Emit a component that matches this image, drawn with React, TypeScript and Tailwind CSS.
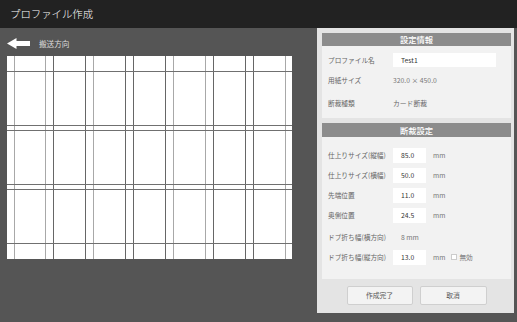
const FONT = { fontFamily: '"Noto Sans CJK JP", "Noto Sans", sans-serif' };

const V_LINES: [number, string][] = [
  [7, "#a8a8a8"],
  [38, "#a8a8a8"],
  [46, "#666"],
  [78, "#666"],
  [86, "#a8a8a8"],
  [118, "#666"],
  [126, "#666"],
  [158, "#666"],
  [166, "#a8a8a8"],
  [198, "#a8a8a8"],
  [206, "#666"],
  [238, "#666"],
  [246, "#666"],
  [278, "#a8a8a8"],
];
const H_LINES = [15, 69, 74, 128, 133, 187];

function LayoutPreview() {
  return (
    <svg width={285} height={203} className="block">
      <rect width={285} height={203} fill="#fff" />
      {V_LINES.map(([x, c]) => (
        <line key={x} x1={x + 0.5} x2={x + 0.5} y1={0} y2={203} stroke={c} strokeWidth={1} />
      ))}
      {H_LINES.map((y) => (
        <line key={y} x1={0} x2={285} y1={y + 0.5} y2={y + 0.5} stroke="#707070" strokeWidth={1} />
      ))}
    </svg>
  );
}

function SectionHeader({ title, h }: { title: string; h: string }) {
  return (
    <div className={`flex ${h} items-center justify-center bg-[#8c8c8c] text-[8.3px] font-medium text-white`}>
      {title}
    </div>
  );
}

function Row({ label, children, className = "" }: { label: string; children: React.ReactNode; className?: string }) {
  return (
    <div className={`flex h-[20px] items-center ${className}`}>
      <span className="w-[65px] shrink-0 text-[6.7px] text-[#666]">{label}</span>
      {children}
    </div>
  );
}

function NumInput({ value }: { value: string }) {
  return (
    <div className="flex h-[15px] w-[33px] items-center bg-white pl-[8px] text-[6.8px] text-[#333]">{value}</div>
  );
}

function Mm() {
  return <span className="ml-[7px] text-[6.7px] text-[#777]">mm</span>;
}

export default function App() {
  return (
    <div className="flex h-[322px] w-[517px] flex-col overflow-hidden bg-[#555]" style={FONT}>
      <header className="flex h-[28px] shrink-0 items-center bg-[#222] pl-[10px] text-[10.4px] font-light text-white">
        プロファイル作成
      </header>

      <div className="flex flex-1">
        <div className="flex flex-1 flex-col pl-[7px] pt-[10px]">
          <div className="flex h-[11px] items-center gap-[9px]">
            <svg width={23} height={11} viewBox="0 0 23 11">
              <path d="M0 5.5 L9.5 0 L9.5 3 L23 3 L23 8 L9.5 8 L9.5 11 Z" fill="#fff" />
            </svg>
            <span className="text-[7.6px] text-[#ddd]">搬送方向</span>
          </div>
          <div className="mt-[7px]">
            <LayoutPreview />
          </div>
        </div>

        <aside className="mb-[9px] mr-[3px] flex w-[197px] flex-col bg-[#e4e4e4] pb-[8px] pl-[5px] pr-[3px] pt-[5px]">
          <section className="bg-[#f2f2f2]">
            <SectionHeader title="設定情報" h="h-[13px]" />
            <div className="flex flex-col px-[6px] pb-[5px] pt-[4px]">
              <Row label="プロファイル名">
                <div className="flex h-[14px] w-[103px] items-center bg-white pl-[8px] text-[6.8px] text-[#333]">
                  Test1
                </div>
              </Row>
              <Row label="用紙サイズ">
                <span className="text-[6.8px] text-[#777]">320.0 × 450.0</span>
              </Row>
              <Row label="断裁種類" className="mt-[3px]">
                <span className="text-[6.8px] text-[#666]">カード断裁</span>
              </Row>
            </div>
          </section>

          <section className="mt-[5px] bg-[#f2f2f2]">
            <SectionHeader title="断裁設定" h="h-[14px]" />
            <div className="flex flex-col px-[6px] pb-[12px] pt-[8px]">
              <Row label="仕上りサイズ(縦幅)">
                <NumInput value="85.0" />
                <Mm />
              </Row>
              <Row label="仕上りサイズ(横幅)">
                <NumInput value="50.0" />
                <Mm />
              </Row>
              <Row label="先端位置">
                <NumInput value="11.0" />
                <Mm />
              </Row>
              <Row label="奥側位置">
                <NumInput value="24.5" />
                <Mm />
              </Row>
              <Row label="ドブ折ち幅(横方向)" className="mt-[2px]">
                <span className="pl-[8px] text-[6.8px] text-[#777]">8 mm</span>
              </Row>
              <Row label="ドブ折ち幅(縦方向)">
                <NumInput value="13.0" />
                <Mm />
                <span className="ml-[6px] h-[6px] w-[6px] border border-[#ccc] bg-white" />
                <span className="ml-[2px] text-[6.7px] text-[#777]">無効</span>
              </Row>
            </div>
          </section>

          <div className="mt-[7px] flex justify-center gap-[7px]">
            <button className="flex h-[19px] w-[66px] items-center justify-center rounded-[2px] border border-[#cfcfcf] bg-[#f3f3f3] text-[6.8px] text-[#555]">
              作成完了
            </button>
            <button className="flex h-[19px] w-[67px] items-center justify-center rounded-[2px] border border-[#cfcfcf] bg-[#f3f3f3] text-[6.8px] text-[#555]">
              取消
            </button>
          </div>
        </aside>
      </div>
    </div>
  );
}
